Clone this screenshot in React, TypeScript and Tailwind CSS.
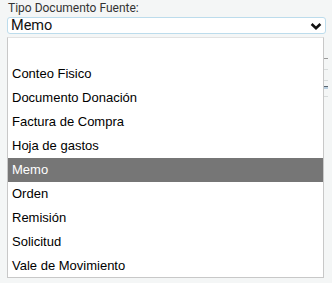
import React from "react";

const items = [
  "",
  "Conteo Fisico",
  "Documento Donación",
  "Factura de Compra",
  "Hoja de gastos",
  "Memo",
  "Orden",
  "Remisión",
  "Solicitud",
  "Vale de Movimiento",
];

export default function App() {
  return (
    <div
      className="w-[332px] h-[283px] overflow-hidden bg-[#f4f6f6] flex flex-col pl-[7px] pr-[4px] pt-[1px]"
      style={{ fontFamily: "Roboto, 'Liberation Sans', sans-serif" }}
    >
      <div className="text-[12px] leading-[15px] text-[#333] pl-[1px]">Tipo Documento Fuente:</div>
      <div className="mt-[1px] mr-[2px] h-[17px] bg-white border border-[#bcdcec] rounded-[3px] flex items-center justify-between pl-[3px] pr-[3px]">
        <span className="text-[14.5px] leading-[15px] text-[#111]">Memo</span>
        <svg width="12" height="9" viewBox="0 0 12 9" className="mt-[1px]">
          <path d="M1.6 2 L6 6.2 L10.4 2" fill="none" stroke="#111" strokeWidth="2.6" />
        </svg>
      </div>

      <div className="flex mt-[3px]">
        <div
          className="w-[321px] h-[241px] bg-white border border-[#c8c8c8] border-t-[#e2e2e2] flex flex-col"
          style={{ fontFamily: "'Liberation Sans', Arial, sans-serif" }}
        >
          {items.map((it, i) => (
            <div
              key={i}
              className={
                "h-[24px] shrink-0 flex items-center pl-[4px] text-[13px] " +
                (it === "Memo" ? "bg-[#767676] text-white" : "text-black")
              }
            >
              {it}
            </div>
          ))}
        </div>
        <div className="flex flex-col w-[4px] pt-[21px]">
          <div className="h-px bg-[#9a9a9a]" />
          <div className="h-px bg-[#d8dcdc] mt-[10px]" />
          <div className="h-px bg-[#d8dcdc] mt-[10px]" />
          <div className="h-[3px] bg-[#b9cfe0] border-t border-[#5a6570] mt-[5px]" />
          <div className="h-px bg-[#d8dcdc] mt-[7px]" />
        </div>
      </div>
    </div>
  );
}
